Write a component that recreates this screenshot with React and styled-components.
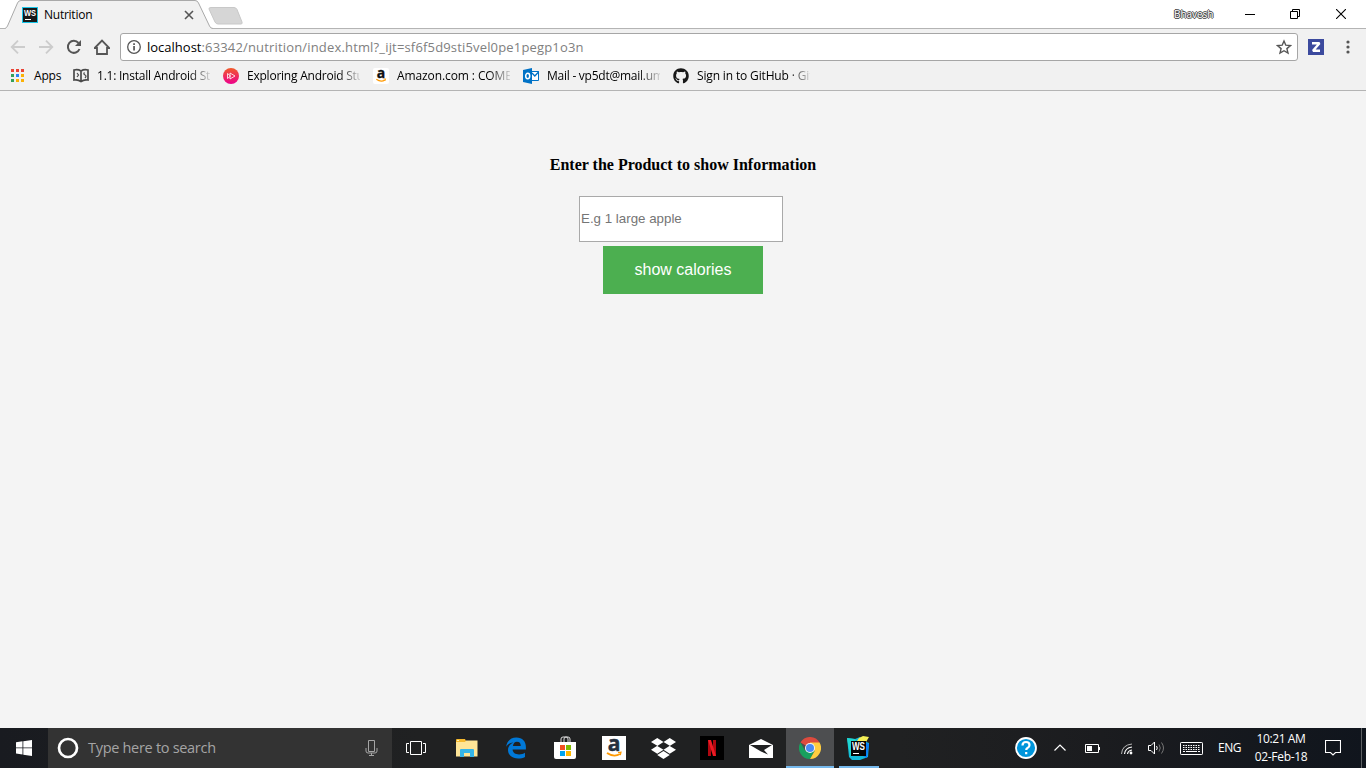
import React from "react";
import styled, { createGlobalStyle } from "styled-components";
import { FaGithub, FaDropbox } from "react-icons/fa";

const Global = createGlobalStyle`
  * { box-sizing: border-box; }
  html, body { margin: 0; padding: 0; overflow: hidden; }
  svg { display: block; flex: none; }
`;

const Screen = styled.div`
  width: 1366px;
  height: 768px;
  display: flex;
  flex-direction: column;
  background: #f4f4f4;
  font-family: "Open Sans", "Noto Sans", sans-serif;
  color: #000;
`;

const Label = styled.span`
  font-size: ${(p) => p.$size || 12}px;
  letter-spacing: ${(p) => p.$track || 0}px;
  color: ${(p) => p.$color || "inherit"};
  white-space: nowrap;
  line-height: 18px;
`;

/* ---------- browser chrome ---------- */
const TabStrip = styled.header`
  height: 29px;
  flex: none;
  display: flex;
  position: relative;
  background: #fff;
  border-bottom: 1px solid #b4b4b4;
`;
const Tab = styled.div`
  width: 208px;
  height: 29px;
  margin-left: 5px;
  padding: 1px 19px 0 17px;
  display: flex;
  align-items: center;
  position: relative;
`;
const TabShape = styled.svg`
  position: absolute;
  left: 0;
  top: 0;
`;
const TabContent = styled.div`
  position: relative;
  width: 100%;
  display: flex;
  align-items: center;
  gap: 6px;
  & > span { flex: 1; }
`;
const NewTab = styled.div`
  margin: 7px 0 0 -6px;
`;
const WindowControls = styled.div`
  margin-left: auto;
  display: flex;
  align-items: center;
  height: 28px;
`;
const UserName = styled.span`
  width: 40px;
  font-size: 10px;
  letter-spacing: -0.05px;
  line-height: 14px;
  color: #fff;
  margin-right: 12px;
  text-shadow: 1px 0 #444, -1px 0 #444, 0 1px #444, 0 -1px #444;
`;
const WindowButton = styled.div`
  width: ${(p) => p.$w || 46}px;
  height: 28px;
  display: flex;
  align-items: center;
  justify-content: center;
`;
const Toolbar = styled.div`
  height: 35px;
  flex: none;
  display: flex;
  align-items: center;
  background: #f1f1f1;
  padding: 1px 9px 0 10px;
`;
const NavButtons = styled.div`
  width: 110px;
  display: flex;
  gap: 12px;
  align-items: center;
`;
const AddressBar = styled.div`
  width: 1178px;
  height: 28px;
  display: flex;
  align-items: center;
  gap: 5px;
  background: #fff;
  border: 1px solid #a6a6a6;
  border-radius: 3px;
  padding: 0 5px;
`;
const Url = styled.div`
  flex: 1;
  display: flex;
`;
const Extension = styled.div`
  width: 16px;
  height: 16px;
  margin: 0 22px 0 10px;
  background: #3c4a9e;
  display: flex;
`;
const BookmarkBar = styled.nav`
  height: 27px;
  flex: none;
  display: flex;
  align-items: center;
  background: #f1f1f1;
  border-bottom: 1px solid #b4b4b4;
  padding: 0 0 3px 10px;
`;
const Bookmark = styled.div`
  width: ${(p) => p.$w || 150}px;
  display: flex;
  align-items: center;
  gap: 8px;
`;
const BookmarkText = styled(Label)`
  width: 113px;
  overflow: hidden;
  mask-image: linear-gradient(90deg, #000 92px, transparent 116px);
`;

/* ---------- page ---------- */
const Page = styled.main`
  flex: 1;
  min-height: 0;
  display: flex;
  flex-direction: column;
  align-items: center;
  background: #f4f4f4;
  padding-top: 65px;
`;
const Heading = styled.h4`
  margin: 0;
  font: bold 16px/18px "Liberation Serif", serif;
  white-space: nowrap;
`;
const ProductInput = styled.input`
  width: 204px;
  height: 46px;
  margin: 22px 4px 4px 0;
  padding: 0 1px 2px;
  border: 1px solid #a9a9a9;
  border-radius: 0;
  background: #fff;
  font: 13.333px "Liberation Sans", sans-serif;
  outline: none;
  &::placeholder { color: #757575; opacity: 1; }
`;
const ShowButton = styled.button`
  width: 160px;
  height: 48px;
  padding: 0;
  border: 0;
  background: #4caf50;
  color: #fff;
  font: 16px "Liberation Sans", sans-serif;
`;

/* ---------- taskbar ---------- */
const Taskbar = styled.footer`
  height: 40px;
  flex: none;
  display: flex;
  background: linear-gradient(90deg, #191b20 0, #202122 420px, #202122 900px, #1b1c1f 1100px, #10151d 1366px);
  color: #fff;
`;
const TaskItem = styled.div`
  width: 48px;
  height: 40px;
  display: flex;
  align-items: center;
  justify-content: center;
  background: ${(p) => (p.$active ? "#4d4e50" : "transparent")};
  background-image: ${(p) => (p.$line ? "linear-gradient(#76b9ed, #76b9ed)" : "none")};
  background-size: ${(p) => p.$line || 0}px 2px;
  background-position: center bottom;
  background-repeat: no-repeat;
`;
const SearchBox = styled.div`
  width: 344px;
  background: #333;
  display: flex;
  align-items: center;
  padding: 0 14px 0 9px;
  gap: 9px;
  & > span { flex: 1; }
`;
const Apps = styled.div`
  display: flex;
  gap: 1px;
  margin-left: 3px;
`;
const Tray = styled.div`
  margin-left: auto;
  display: flex;
  align-items: center;
`;
const TrayItem = styled.div`
  width: ${(p) => p.$w}px;
  display: flex;
  justify-content: center;
`;
const Clock = styled.div`
  width: 74px;
  display: flex;
  flex-direction: column;
  align-items: center;
`;
const DesktopEdge = styled.div`
  width: 5px;
  height: 40px;
  margin-left: 13px;
  border-left: 1px solid #5d6063;
`;

const Svg = ({ w = 16, h = w, box, children, ...rest }) => (
  <svg width={w} height={h} viewBox={box || `0 0 ${w} ${h}`} fill="none" {...rest}>{children}</svg>
);

const WebStormSmall = () => (
  <Svg w={16}>
    <path fill="#18c5e8" d="M0 0h16v16H0z" />
    <path fill="#181818" d="M1 1h14v14H1z" />
    <text x="2" y="9" fontSize="9" fontWeight="700" fill="#fff" textLength="12" lengthAdjust="spacingAndGlyphs" fontFamily="Liberation Sans">WS</text>
    <path fill="#fff" d="M3 12h6v1H3z" />
  </Svg>
);

const AmazonIcon = ({ size = 16, dark = "#111" }) => (
  <Svg w={size} box="0 0 24 24">
    <rect width="24" height="24" rx={size === 16 ? 3 : 0} fill="#fff" />
    <text x="12" y="15" textAnchor="middle" fontSize="21" fontWeight="700" fill={dark} stroke={dark} strokeWidth=".5" fontFamily="Open Sans">a</text>
    <path d="M5 17q7 4.7 13 1" stroke="#f90" strokeWidth="1.8" />
    <path d="M16 16.5l3-.3-.7 3" stroke="#f90" strokeWidth="1.2" />
  </Svg>
);

const dots = ["#ea4335", "#ea4335", "#ea4335", "#34a05a", "#2a83f3", "#fbb105", "#34a05a", "#fbb105", "#fbb105"];

const Browser = () => (
  <>
    <TabStrip>
      <Tab>
        <TabShape width="208" height="29" viewBox="0 0 208 29">
          <path d="M0 28.5Q1.500 28 2.500 26L12.500 3Q13.500 .5 16 .5H190Q192.500 .5 193.500 3L204.500 26Q205.500 28.500 208 28.500V29H0Z" fill="#f1f1f1" />
          <path d="M0 28.500Q1.500 28 2.500 26L12.500 3Q13.500 .5 16 .5H190Q192.500 .5 193.500 3L204.500 26Q205.500 28.500 208 28.500" fill="none" stroke="#a9a9a9" />
        </TabShape>
        <TabContent>
          <WebStormSmall />
          <Label $track={-0.25}>Nutrition</Label>
          <Svg w={10} stroke="#555" strokeWidth="1.600"><path d="M1 1l8 8M9 1l-8 8" /></Svg>
        </TabContent>
      </Tab>
      <NewTab>
        <Svg w={36} h={18}>
          <path d="M4 .5H27q2 0 3 2L35 15q.7 2-1 2H11q-2 0-3-2L2 2Q1.500 .5 4 .5Z" fill="#d6d6d6" stroke="#c8c8c8" />
        </Svg>
      </NewTab>
      <WindowControls>
        <UserName>Bhavesh</UserName>
        <WindowButton $w={47}><Svg w={10} h={10}><path d="M0 5.500h10" stroke="#000" /></Svg></WindowButton>
        <WindowButton $w={43}><Svg w={10}><path d="M.5 2.500h7v7h-7zM2.500 2.500v-2h7v7h-2" stroke="#000" /></Svg></WindowButton>
        <WindowButton $w={50}><Svg w={10}><path d="M0 0l10 10M10 0L0 10" stroke="#000" strokeWidth="1.100" /></Svg></WindowButton>
      </WindowControls>
    </TabStrip>
    <Toolbar>
      <NavButtons>
        <Svg w={16} stroke="#ccc" strokeWidth="1.800"><path d="M15 8H2M8 1.700L1.700 8 8 14.300" /></Svg>
        <Svg w={16} stroke="#ccc" strokeWidth="1.800"><path d="M1 8h13M8 1.700L14.300 8 8 14.300" /></Svg>
        <Svg w={16}><path d="M13.500 10A6 6 0 1 1 12.500 4" stroke="#555" strokeWidth="2" /><path d="M15 1v6H9z" fill="#555" /></Svg>
        <Svg w={16} stroke="#555" strokeWidth="1.800"><path d="M.7 9L8 1.500 15.300 9H13v6H3V9Z" /></Svg>
      </NavButtons>
      <AddressBar>
        <Svg w={16}>
          <circle cx="8" cy="8" r="6.300" stroke="#555" strokeWidth="1.300" />
          <path fill="#555" d="M7.200 7h1.700v4.500H7.200zM7.200 4.300h1.700V6H7.200z" />
        </Svg>
        <Url>
          <Label $size={13}>localhost</Label>
          <Label $size={13} $track={0.165} $color="#808080">:63342/nutrition/index.html?_ijt=sf6f5d9sti5vel0pe1pegp1o3n</Label>
        </Url>
        <Svg w={16}><path d="M8 2l1.800 4.200 4.600.4-3.500 3 1.100 4.500L8 11.700l-4 2.400 1.100-4.500-3.500-3 4.600-.4Z" stroke="#555" strokeWidth="1.400" /></Svg>
      </AddressBar>
      <Extension>
        <Svg w={16}><path d="M4 4.200h7.500L5 11.800h7" stroke="#fff" strokeWidth="2.400" strokeLinejoin="bevel" /></Svg>
      </Extension>
      <Svg w={4} h={14}><g fill="#555"><circle cx="2" cy="2" r="1.600" /><circle cx="2" cy="7" r="1.600" /><circle cx="2" cy="12" r="1.600" /></g></Svg>
    </Toolbar>
    <BookmarkBar>
      <Bookmark $w={63}>
        <Svg w={16}>{dots.map((c, i) => <rect key={i} x={1 + (i % 3) * 5} y={1 + Math.floor(i / 3) * 5} width="3" height="3" fill={c} />)}</Svg>
        <Label $track={-0.2}>Apps</Label>
      </Bookmark>
      <Bookmark>
        <Svg w={16} stroke="#4a4a4a" strokeWidth="1.700">
          <path d="M8 3Q5 1 1 2v10q4-.8 7 1.500 3-2.300 7-1.500V2Q11 1 8 3ZM8 3v10" />
          <path d="M4 5l1.500 2L4 9M11.500 4.500Q10 6 12 7t0 3" strokeWidth="1.200" />
        </Svg>
        <BookmarkText $track={-0.23}>1.1: Install Android Studio</BookmarkText>
      </Bookmark>
      <Bookmark>
        <Svg w={16}>
          <defs><linearGradient id="ps" x2="0" y2="1"><stop stopColor="#f15b2a" /><stop offset="1" stopColor="#ec008c" /></linearGradient></defs>
          <circle cx="8" cy="8" r="8" fill="url(#ps)" />
          <path d="M4.500 5.500v5l3-2.500ZM7 5v6L12 8Z" stroke="#fff" strokeWidth=".8" />
        </Svg>
        <BookmarkText $track={-0.23}>Exploring Android Studio</BookmarkText>
      </Bookmark>
      <Bookmark><AmazonIcon /><BookmarkText $track={-0.1}>Amazon.com : COMBO</BookmarkText></Bookmark>
      <Bookmark>
        <Svg w={16}>
          <path d="M7 3.500h8.500v9H7" fill="#fff" stroke="#0072c6" />
          <path d="M9 5l2.800 3L16 3.500" stroke="#0072c6" strokeWidth="1.300" />
          <path d="M0 2l9-2v16l-9-2Z" fill="#0072c6" />
          <ellipse cx="4.700" cy="8" rx="2" ry="2.700" stroke="#fff" strokeWidth="1.500" />
        </Svg>
        <BookmarkText $track={-0.25}>Mail - vp5dt@mail.umkc</BookmarkText>
      </Bookmark>
      <Bookmark><FaGithub size={16} color="#181818" /><BookmarkText $track={-0.15}>Sign in to GitHub · GitHub</BookmarkText></Bookmark>
    </BookmarkBar>
  </>
);

const FolderIcon = () => (
  <Svg w={22} h={18}>
    <path d="M0 1q0-1 1-1h8l1 2h11v3H0Z" fill="#f5b92e" />
    <path d="M1 1h2v1H1z" fill="#fff2b5" />
    <path d="M0 3h9l1-1.500h11.500V17.500H0Z" fill="#fee597" />
    <path d="M4 11q0-1 1-1h12q1 0 1 1v7h-4v-4H8v4H4Z" fill="#35b5e8" />
  </Svg>
);
const EdgeIcon = () => (
  <Svg w={22} box="0 0 24 24">
    <path fill="#0078d7" d="M1.300 10.600C2 4.800 6 .6 12.400.6 19 .6 22.800 5 22.800 11v2.700H8.300c.2 3.500 3 5.300 7 5.300 2.600 0 4.800-.8 6.500-1.900v4.700c-2 1.200-4.700 1.700-7.500 1.700-6.700 0-11-3.900-11-9.200 0-3.900 2.200-6.800 5.800-8.400-4 .3-6.300 2-7.800 4.700ZM8.600 9.700h8.600c0-2.800-1.300-4.500-4.200-4.500-2.300 0-3.900 1.700-4.400 4.500Z" />
  </Svg>
);
const StoreIcon = () => (
  <Svg w={24} h={24}>
    <path d="M8 7V3q0-2 2-2h3q2 0 2 2v4M11 7V3q0-2 2-2h2q2 0 2 2v4" stroke="#ddd" />
    <path d="M1 6h22v15q0 2-2 2H3q-2 0-2-2Z" fill="#fff" />
    <path d="M7 9h5v5H7z" fill="#f25022" /><path d="M13 9h5v5h-5z" fill="#7fba00" />
    <path d="M7 15h5v5H7z" fill="#00a4ef" /><path d="M13 15h5v5h-5z" fill="#ffb900" />
  </Svg>
);
const NetflixIcon = () => (
  <Svg w={24}>
    <path fill="#000" d="M0 0h24v24H0z" />
    <path fill="#b00710" d="M8 4h3v16H8zM13 4h3v16h-3z" />
    <path fill="#ed1b24" d="M8 4h3l5 16h-3z" />
  </Svg>
);
const MailIcon = () => (
  <Svg w={24} h={19}>
    <path d="M0 6L12 0l12 6v13H0Z" fill="#fff" />
    <path d="M1 6h22l-8 5 4 4.500-7-3Z" fill="#202122" />
  </Svg>
);
const ChromeIcon = () => (
  <Svg w={22} box="0 0 24 24">
    <path fill="#dd4b3e" d="M12 12L1.600 6A12 12 0 0 1 22.400 6Z" />
    <path fill="#18a05e" d="M1.600 6A12 12 0 0 0 12 24l5.200-9H12L6.800 15Z" />
    <path fill="#ffcd40" d="M12 24l5.200-9L12 12V6h10.400A12 12 0 0 1 12 24Z" />
    <circle cx="12" cy="12" r="5.500" fill="#f4f4f4" />
    <circle cx="12" cy="12" r="4.400" fill="#4a8af4" />
  </Svg>
);
const WebStormIcon = () => (
  <Svg w={26} h={25}>
    <path fill="#12b9d8" d="M1 2l8 1 5-2 4 4 5 2-1 14-8 3-8 0-3-3Z" />
    <path fill="#087cfa" d="M17 5l6 3-2 14-6-3Z" />
    <path fill="#f4ef56" d="M13 2l4-2 6 1-3 5-5 2-4-3Z" />
    <path fill="#20d7d0" d="M1 2l8 1 2 4-5 14-2-2Z" />
    <path fill="#060606" d="M5 5h15v15H5z" />
    <text x="6" y="14" fontSize="10" fontWeight="700" fill="#fff" textLength="13" lengthAdjust="spacingAndGlyphs" fontFamily="Liberation Sans">WS</text>
    <path fill="#fff" d="M7 17h6v1H7z" />
  </Svg>
);

const WindowsTaskbar = () => (
  <Taskbar>
    <TaskItem>
      <Svg w={16}><path fill="#fff" d="M0 2.200L6.500 1.300V7.500H0ZM7.300 1.200L16 0v7.500H7.300ZM0 8.300h6.500v6.200L0 13.600ZM7.300 8.300H16V16l-8.700-1.300Z" /></Svg>
    </TaskItem>
    <SearchBox>
      <Svg w={22}><circle cx="11" cy="11" r="9" stroke="#fff" strokeWidth="2.700" /></Svg>
      <Label $size={14.5} $track={-0.3} $color="#a5a5a5">Type here to search</Label>
      <Svg w={13} h={17} stroke="#a5a5a5"><path d="M3.500 .5h6v11h-6zM1 8v3q0 2 2 2h7q2 0 2-2V8M6.500 13v3M4 15.500h5" /></Svg>
    </SearchBox>
    <TaskItem><Svg w={20} h={15} stroke="#fff"><path d="M4.500 .5h11v13h-11zM3 2.500H.5v9H3M17 2.500h2.500v9H17" /></Svg></TaskItem>
    <Apps>
      <TaskItem><FolderIcon /></TaskItem>
      <TaskItem><EdgeIcon /></TaskItem>
      <TaskItem><StoreIcon /></TaskItem>
      <TaskItem><AmazonIcon size={24} dark="#25303e" /></TaskItem>
      <TaskItem><FaDropbox size={25} color="#fff" /></TaskItem>
      <TaskItem><NetflixIcon /></TaskItem>
      <TaskItem><MailIcon /></TaskItem>
      <TaskItem $active $line={48}><ChromeIcon /></TaskItem>
      <TaskItem $line={40}><WebStormIcon /></TaskItem>
    </Apps>
    <Tray>
      <TrayItem $w={36}>
        <Svg w={22}><circle cx="11" cy="11" r="10" fill="#0095db" stroke="#fff" strokeWidth="1.800" /><path d="M7.500 8.500Q7.500 5 11 5t3.500 3q0 2-2 3-1.300.7-1.300 2M11.200 15v2.200" stroke="#fff" strokeWidth="2.200" /></Svg>
      </TrayItem>
      <TrayItem $w={32}><Svg w={12} h={8}><path d="M.5 6.500L6 1l5.500 5.500" stroke="#fff" strokeWidth="1.200" /></Svg></TrayItem>
      <TrayItem $w={32}><Svg w={15} h={9}><path d="M.5 .5h13v8H.500zM14.500 3v3" stroke="#fff" /><path fill="#fff" d="M2 2h5v5H2z" /></Svg></TrayItem>
      <TrayItem $w={36}>
        <Svg w={13} h={13}><circle cx="11" cy="11" r="1.400" fill="#fff" /><path d="M7.500 12Q8 8.500 12 8M4.500 12Q5 6 12 5" stroke="#fff" strokeWidth="1.200" /><path d="M1.500 12Q2 3 12 2" stroke="#b5b5b5" /></Svg>
      </TrayItem>
      <TrayItem $w={24}>
        <Svg w={17} h={14}><path d="M.5 4.500H3L6.500 1v12L3 9.500H.500zM8.500 5Q10 7 8.500 9" stroke="#fff" /><path d="M11 3.500q2.500 3.500 0 7M13.500 1.500q4 5.500 0 11" stroke="#777" /></Svg>
      </TrayItem>
      <TrayItem $w={47}>
        <Svg w={23} h={13} stroke="#fff"><rect x=".5" y=".5" width="22" height="12" rx=".7" /><path d="M3 3.500h17M3 5.500h17M3 7.500h17" strokeDasharray="1.500 1" /><path d="M3 9.500h2M6 9.500h11M18 9.500h2" /></Svg>
      </TrayItem>
      <TrayItem $w={29}><Label $track={-0.4}>ENG</Label></TrayItem>
      <Clock>
        <Label $track={-0.4}>10:21 AM</Label>
        <Label $track={-0.3}>02-Feb-18</Label>
      </Clock>
      <TrayItem $w={30}><Svg w={16} h={16} stroke="#fff" strokeWidth="1.100"><path d="M.5 .5h15v12h-5L8 15l-2.500-2.500h-5Z" /></Svg></TrayItem>
      <DesktopEdge />
    </Tray>
  </Taskbar>
);

export default function App() {
  return (
    <>
      <Global />
      <Screen>
        <Browser />
        <Page>
          <Heading>Enter the Product to show Information</Heading>
          <ProductInput placeholder="E.g 1 large apple" />
          <ShowButton>show calories</ShowButton>
        </Page>
        <WindowsTaskbar />
      </Screen>
    </>
  );
}
